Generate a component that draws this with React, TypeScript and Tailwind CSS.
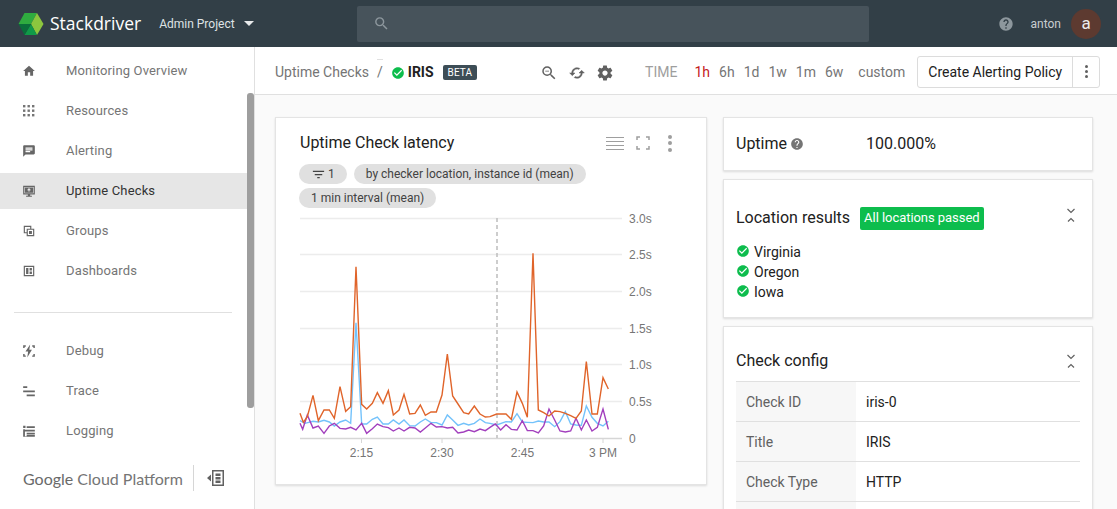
import React from 'react';

const ink = 'fill-current';

// material paths
const paths = {
  home: 'M10 20v-6h4v6h5v-8h3L12 3 2 12h3v8z',
  chat: 'M20 2H4c-1.1 0-1.99.9-1.99 2L2 22l4-4h14c1.1 0 2-.9 2-2V4c0-1.1-.9-2-2-2zM6 9h12v2H6V9zm8 5H6v-2h8v2zm4-6H6V6h12v2z',
  search: 'M15.5 14h-.79l-.28-.27A6.471 6.471 0 0 0 16 9.5 6.5 6.5 0 1 0 9.5 16c1.61 0 3.09-.59 4.23-1.57l.27.28v.79l5 4.99L20.49 19l-4.99-5zm-6 0C7.01 14 5 11.99 5 9.5S7.01 5 9.5 5 14 7.01 14 9.5 11.99 14 9.5 14z',
  zoomOut: 'M15.5 14h-.79l-.28-.27A6.471 6.471 0 0 0 16 9.5 6.5 6.5 0 1 0 9.5 16c1.61 0 3.09-.59 4.23-1.57l.27.28v.79l5 4.99L20.49 19l-4.99-5zm-6 0C7.01 14 5 11.99 5 9.5S7.01 5 9.5 5 14 7.01 14 9.5 11.99 14 9.5 14zM7 9h5v1H7z',
  cached: 'M19 8l-4 4h3c0 3.31-2.69 6-6 6-1.01 0-1.97-.25-2.8-.7l-1.46 1.46C8.97 19.54 10.43 20 12 20c4.42 0 8-3.58 8-8h3l-4-4zM6 12c0-3.31 2.69-6 6-6 1.01 0 1.97.25 2.8.7l1.46-1.46C15.03 4.46 13.57 4 12 4c-4.42 0-8 3.58-8 8H1l4 4 4-4H6z',
  gear: 'M19.43 12.98c.04-.32.07-.64.07-.98s-.03-.66-.07-.98l2.11-1.65c.19-.15.24-.42.12-.64l-2-3.46c-.12-.22-.39-.3-.61-.22l-2.49 1c-.52-.4-1.08-.73-1.69-.98l-.38-2.65C14.46 2.18 14.25 2 14 2h-4c-.25 0-.46.18-.49.42l-.38 2.65c-.61.25-1.17.59-1.69.98l-2.49-1c-.23-.09-.49 0-.61.22l-2 3.46c-.13.22-.07.49.12.64l2.11 1.65c-.04.32-.07.65-.07.98s.03.66.07.98l-2.11 1.65c-.19.15-.24.42-.12.64l2 3.46c.12.22.39.3.61.22l2.49-1c.52.4 1.08.73 1.69.98l.38 2.65c.03.24.24.42.49.42h4c.25 0 .46-.18.49-.42l.38-2.65c.61-.25 1.17-.59 1.69-.98l2.49 1c.23.09.49 0 .61-.22l2-3.46c.12-.22.07-.49-.12-.64l-2.11-1.65zM12 15.5c-1.93 0-3.5-1.57-3.5-3.5s1.57-3.5 3.5-3.5 3.5 1.57 3.5 3.5-1.57 3.5-3.5 3.5z',
  help: 'M12 2C6.48 2 2 6.48 2 12s4.48 10 10 10 10-4.48 10-10S17.52 2 12 2zm1 17h-2v-2h2v2zm2.07-7.75l-.9.92C13.45 12.9 13 13.5 13 15h-2v-.5c0-1.1.45-2.1 1.17-2.83l1.24-1.26c.37-.36.59-.86.59-1.41 0-1.1-.9-2-2-2s-2 .9-2 2H8c0-2.21 1.79-4 4-4s4 1.79 4 4c0 .88-.36 1.68-.93 2.25z',
  check: 'M12 2C6.48 2 2 6.48 2 12s4.48 10 10 10 10-4.48 10-10S17.52 2 12 2zm-2 15l-5-5 1.41-1.41L10 14.17l7.59-7.59L19 8l-9 9z',
  filter: 'M10 18h4v-2h-4v2zM3 6v2h18V6H3zm3 7h12v-2H6v2z',
  monitor: 'M2 3h20v15h-8v2h3v2H7v-2h3v-2H2zm2 2v11h16V5zm1 1h14v9H5zm7 1-3.500 3.500H11V13h2v-2.500h2.500z',
  groups: 'M3 3h13v5h5v13H8v-5H3V3zm2 2v9h3V8h6V5H5zm5 5v9h9v-9h-9zm2 2h5v5h-5v-5z',
  dashboard: 'M3 3h18v18H3V3zm2 2v14h14V5H5zm2 2h4v10H7V7zm6 0h4v4h-4V7zm0 6h4v4h-4v-4z',
  debug: 'M14 1 6 13h4.500L9 23l8-13h-4.500zM2 2h4.500v2.500H4.500V7H2zm20 0v5h-2.500V4.500h-2V2zM2 17h2.500v2.500h2V22H2zm20 0v5h-4.500v-2.500h2V17z',
  trace: 'M2 4h7v3H2zM2 11h20v3H2zM8 18h14v3H8z',
  logging: 'M2 3h4v4H2zM8 4h14v3H8zM2 9h3v12h3v-2h14v3H2zm3 1h3v3h14v-3H8v3H5zM8 15h14v3H8z',
};

const Icon = ({ d, className }: { d: string; className: string }) => (
  <svg viewBox="0 0 24 24" className={`${ink} ${className}`}>
    <path d={d} />
  </svg>
);

const AppsIcon = () => (
  <svg viewBox="0 0 12 12" className="w-[12px] h-[12px] fill-[#757575]">
    {[0, 4.5, 9].map(y => [0, 4.5, 9].map(x => <rect key={`${x}-${y}`} x={x} y={y} width="2.4" height="2.4" />))}
  </svg>
);

const topNav = [
  { label: 'Monitoring Overview', icon: <Icon d={paths.home} className="w-[14px] h-[14px]" /> },
  { label: 'Resources', icon: <AppsIcon /> },
  { label: 'Alerting', icon: <Icon d={paths.chat} className="w-[14px] h-[14px]" /> },
  { label: 'Uptime Checks', icon: <Icon d={paths.monitor} className="w-[14px] h-[14px]" />, active: true },
  { label: 'Groups', icon: <Icon d={paths.groups} className="w-[14px] h-[14px]" /> },
  { label: 'Dashboards', icon: <Icon d={paths.dashboard} className="w-[14px] h-[14px]" /> },
];

const lowerNav = [
  { label: 'Debug', icon: <Icon d={paths.debug} className="w-[14px] h-[14px]" /> },
  { label: 'Trace', icon: <Icon d={paths.trace} className="w-[14px] h-[14px]" /> },
  { label: 'Logging', icon: <Icon d={paths.logging} className="w-[14px] h-[14px]" /> },
];

const NavRow = ({ label, icon, active }: { label: string; icon: React.ReactNode; active?: boolean }) => (
  <div className={`h-[36px] mb-[4px] flex items-center ${active ? 'bg-[#e6e6e6] text-[#333]' : 'text-[#757575]'}`}>
    <div className="w-[22px] ml-[18px] mr-[26px] flex justify-center text-[#666]">{icon}</div>
    <span className="text-[13px] tracking-[0.15px]">{label}</span>
  </div>
);

// traced series, in 3x crop coordinates of the two chart halves
const leftX = (x: number) => x / 3 + 280;
const rightX = (x: number) => x / 3 + 490;
const toY = (y: number) => y / 3 + 210;
const series = (a: number[][], b: number[][]) =>
  [...a.map(([x, y]) => `${leftX(x)},${toY(y)}`), ...b.map(([x, y]) => `${rightX(x)},${toY(y)}`)].join(' ');

const orange = series(
  [[60,610],[70,637],[82,620],[99,556],[115,632],[132,600],[148,600],[163,625],[180,530],[197,604],[212,590],[228,170],[245,583],[260,597],[277,580],[292,548],[309,580],[325,542],[340,615],[357,600],[372,553],[389,612],[405,610],[421,585],[436,616],[453,606],[469,606],[486,555],[502,432],[518,558],[534,582],[551,608],[566,612],[583,588],[600,612],[616,621]],
  [[0,620],[20,612],[48,612],[64,628],[81,546],[97,580],[112,622],[129,130],[145,600],[161,608],[177,618],[194,603],[210,605],[226,610],[242,617],[258,625],[274,603],[289,455],[306,612],[322,612],[339,503],[355,537]],
);
const blue = series(
  [[60,632],[75,640],[99,634],[115,636],[132,631],[148,636],[163,648],[180,636],[197,630],[212,640],[228,338],[245,642],[260,642],[277,628],[292,621],[309,642],[325,642],[340,630],[357,642],[372,630],[389,647],[405,648],[421,636],[436,627],[453,638],[469,638],[486,645],[502,615],[518,630],[534,646],[551,640],[566,645],[583,640],[600,627],[616,638]],
  [[0,640],[20,645],[48,635],[64,636],[81,611],[97,636],[112,637],[129,638],[145,633],[161,636],[177,636],[194,650],[210,635],[226,605],[242,642],[258,645],[274,646],[289,588],[306,622],[322,640],[339,648],[355,634]],
);
const purple = series(
  [[60,640],[68,658],[82,615],[99,654],[115,648],[132,670],[148,648],[163,640],[180,655],[197,657],[212,652],[228,660],[245,640],[260,670],[277,656],[292,642],[309,650],[325,653],[340,663],[357,654],[372,663],[389,652],[405,654],[421,666],[436,654],[453,640],[469,651],[486,650],[502,654],[518,652],[534,669],[551,666],[566,660],[583,665],[600,657],[616,662]],
  [[0,652],[16,642],[32,660],[48,644],[64,658],[81,660],[97,632],[112,662],[129,662],[145,669],[161,648],[177,597],[194,630],[210,663],[226,666],[242,663],[258,625],[274,660],[289,630],[306,663],[322,652],[339,597],[355,658]],
);

const gridY = [
  { y: 218.5, label: '3.0s' },
  { y: 254.5, label: '2.5s' },
  { y: 291.5, label: '2.0s' },
  { y: 328.5, label: '1.5s' },
  { y: 364.5, label: '1.0s' },
  { y: 401.5, label: '0.5s' },
];

// svg viewBox uses page coordinates so traced points stay readable
const LatencyChart = () => (
  <svg viewBox="290 212 372 250" className="w-[372px] h-[250px] block font-['Liberation_Sans',sans-serif]">
    {gridY.map(g => (
      <g key={g.label}>
        <line x1="300" x2="622" y1={g.y} y2={g.y} stroke="#ececec" strokeWidth="1.3" />
        <text x="629" y={g.y + 4} fontSize="12" fill="#757575">{g.label}</text>
      </g>
    ))}
    <line x1="300" x2="622" y1="438.5" y2="438.5" stroke="#d6d6d6" strokeWidth="1.3" />
    <text x="629" y="442.5" fontSize="12" fill="#757575">0</text>
    {[361.5, 442, 522.5, 603].map(x => (
      <line key={x} x1={x} x2={x} y1="438" y2="443" stroke="#d6d6d6" strokeWidth="1" />
    ))}
    <text x="361.5" y="456.5" fontSize="12" fill="#757575" textAnchor="middle">2:15</text>
    <text x="442" y="456.5" fontSize="12" fill="#757575" textAnchor="middle">2:30</text>
    <text x="522.5" y="456.5" fontSize="12" fill="#757575" textAnchor="middle">2:45</text>
    <text x="603" y="456.5" fontSize="12" fill="#757575" textAnchor="middle">3 PM</text>
    <line x1="497" x2="497" y1="218" y2="438" stroke="#bdbdbd" strokeWidth="1.5" strokeDasharray="4 3" />
    <polyline points={blue} fill="none" stroke="#73c2fb" strokeWidth="1.4" />
    <polyline points={purple} fill="none" stroke="#a23fbd" strokeWidth="1.4" />
    <polyline points={orange} fill="none" stroke="#e0642a" strokeWidth="1.4" />
  </svg>
);

const Chip = ({ children }: { children: React.ReactNode }) => (
  <span className="h-[20px] rounded-full bg-[#e0e0e0] px-[12px] inline-flex items-center text-[12px] text-[#424242]">{children}</span>
);

const CollapseIcon = () => (
  <svg viewBox="0 0 10 15" className="w-[10px] h-[15px] fill-none stroke-[#616161] stroke-[1.2]">
    <path d="M1.500 1 5 4.500 8.500 1M2 13.500 5 10.500l3 3" />
  </svg>
);

const configRows = [
  ['Check ID', 'iris-0'],
  ['Title', 'IRIS'],
  ['Check Type', 'HTTP'],
  ['', ''],
];

export default function App() {
  return (
    <div className="w-[1117px] h-[509px] overflow-hidden flex flex-col bg-white font-['Roboto',sans-serif]">
      {/* Header */}
      <header className="h-[47px] shrink-0 bg-[#323f47] flex items-center text-white">
        <svg viewBox="0 0 26 24" className="w-[26px] h-[24px] ml-[18px] shrink-0">
          <path d="M.5 12 6.500 1H19l-6 11z" fill="#2fab3f" />
          <path d="M19 1l6.500 11L19 23l-6-11z" fill="#8cc63e" />
          <path d="M13 12l6 11H6.500z" fill="#109a48" />
          <path d="M.5 12H13L6.500 23z" fill="#0a6e3a" />
        </svg>
        <span className="ml-[6px] text-[17.5px] font-['Open_Sans',sans-serif] leading-none">Stackdriver</span>
        <span className="ml-[18px] text-[12px] text-[#dfe3e5]">Admin Project</span>
        <span className="ml-[9px] w-0 h-0 border-x-[5px] border-x-transparent border-t-[5px] border-t-[#e8eaeb]" />
        <div className="ml-[103px] w-[512px] h-[36px] rounded-[2px] bg-[#47535b] flex items-center pl-[16px] text-[#8d979d]">
          <Icon d={paths.search} className="w-[17px] h-[17px]" />
        </div>
        <Icon d={paths.help} className="ml-auto w-[16px] h-[16px] text-[#8d979d]" />
        <span className="ml-[17px] text-[12px] text-[#c9ced1]">anton</span>
        <span className="ml-[10px] mr-[16px] w-[30px] h-[30px] rounded-full bg-[#5d3a30] flex items-center justify-center text-[17px] text-[#ececec]">a</span>
      </header>

      <div className="flex-1 min-h-0 flex">
        {/* Sidebar */}
        <aside className="w-[255px] shrink-0 border-r border-[#e0e0e0] flex flex-col relative">
          <div className="absolute right-0 top-[46px] w-[7px] h-[315px] rounded-[3px] bg-[#9e9e9e]" />
          <nav className="pt-[6px] pr-[7px]">
            {topNav.map(item => <NavRow key={item.label} {...item} />)}
          </nav>
          <div className="ml-[14px] mr-[22px] mt-[19px] mb-[20px] border-t border-[#e0e0e0]" />
          <nav className="pr-[7px]">
            {lowerNav.map(item => <NavRow key={item.label} {...item} />)}
          </nav>
          <div className="mt-[12px] ml-[23px] flex items-center h-[26px]">
            <span className="w-[170px] text-[#757575] text-[16px] whitespace-nowrap font-['Lato',sans-serif] pt-[1px]"><span className="text-[#6a6a6a]">Google</span> Cloud Platform</span>
            <div className="h-[26px] border-l border-[#d6d6d6]" />
            <svg viewBox="0 0 17 16" className="ml-[13px] w-[17px] h-[16px] fill-[#616161]">
              <path d="M0 8l4-3.500v7zM5 0h12v16H5zm1.500 1.500v13h9v-13zM8.500 3.500h5V6h-5zm0 3.500h5v2.500h-5zm0 3.500h5V13h-5z" fillRule="evenodd" />
            </svg>
          </div>
        </aside>

        {/* Main */}
        <main className="flex-1 min-w-0 flex flex-col bg-[#fafafa]">
          <div className="h-[48px] shrink-0 bg-white border-b border-[#e0e0e0] flex items-center pl-[20px] pt-[4px] text-[#757575]">
            <span className="text-[14px]">Uptime Checks</span>
            <span className="relative ml-[8px] text-[14px]">
              /
              <i className="absolute left-0 -top-[3px] w-[6px] h-px bg-[#e0e0e0]" />
            </span>
            <Icon d={paths.check} className="ml-[8px] w-[14px] h-[14px] text-[#0dbd4d]" />
            <span className="ml-[3px] text-[14px] font-bold text-[#212121]">IRIS</span>
            <span className="ml-[9px] h-[15px] px-[5px] rounded-[2px] bg-[#3d4d56] text-white text-[10px] tracking-[0.1px] flex items-center">BETA</span>
            <Icon d={paths.zoomOut} className="ml-[63px] w-[18px] h-[18px] text-[#616161]" />
            <Icon d={paths.cached} className="ml-[11px] w-[16px] h-[16px] text-[#616161] stroke-current stroke-[0.7]" />
            <Icon d={paths.gear} className="ml-[11px] w-[18px] h-[18px] text-[#616161]" />
            <span className="ml-[31px] text-[14px] text-[#9e9e9e]">TIME</span>
            <span className="ml-[17px] text-[14px] text-[#c41c1c]">1h</span>
            <span className="ml-[9px] text-[14px]">6h</span>
            <span className="ml-[9px] text-[14px]">1d</span>
            <span className="ml-[9px] text-[14px]">1w</span>
            <span className="ml-[9px] text-[14px]">1m</span>
            <span className="ml-[9px] text-[14px]">6w</span>
            <span className="ml-[15px] text-[14px]">custom</span>
            <div className="ml-[12px] -mt-[2px] h-[32px] flex border border-[#dcdcdc] rounded-[3px] bg-white text-[14px] text-[#212121]">
              <span className="px-[10px] pt-[1px] flex items-center border-r border-[#dcdcdc]">Create Alerting Policy</span>
              <span className="w-[26px] flex flex-col items-center justify-center gap-[2px]">
                <i className="w-[3px] h-[3px] bg-[#616161] rounded-full" />
                <i className="w-[3px] h-[3px] bg-[#616161] rounded-full" />
                <i className="w-[3px] h-[3px] bg-[#616161] rounded-full" />
              </span>
            </div>
          </div>

          <div className="flex-1 min-h-0 flex gap-[16px] pl-[20px] pt-[22px] overflow-hidden">
            {/* Chart card */}
            <section className="w-[432px] h-[368px] shrink-0 bg-white border border-[#e4e4e4] shadow-[0_1px_2px_rgba(0,0,0,0.12)]">
              <div className="flex items-center justify-between pl-[24px] pr-[34px] pt-[13px]">
                <h2 className="text-[16px] text-[#212121]">Uptime Check latency</h2>
                <div className="flex items-center gap-[12px] text-[#9e9e9e]">
                  <div className="w-[18px] flex flex-col gap-[3px]">
                    <i className="h-px bg-[#9e9e9e]" /><i className="h-px bg-[#9e9e9e]" /><i className="h-px bg-[#9e9e9e]" /><i className="h-px bg-[#9e9e9e]" />
                  </div>
                  <svg viewBox="0 0 14 14" className="w-[14px] h-[14px] fill-none stroke-[#9e9e9e] stroke-[1.5]">
                    <path d="M1 4V1h3M10 1h3v3M13 10v3h-3M4 13H1v-3" />
                  </svg>
                  <div className="ml-[6px] flex flex-col gap-[2.5px] w-[4px]">
                    <i className="w-[4px] h-[4px] rounded-full bg-[#9e9e9e]" /><i className="w-[4px] h-[4px] rounded-full bg-[#9e9e9e]" /><i className="w-[4px] h-[4px] rounded-full bg-[#9e9e9e]" />
                  </div>
                </div>
              </div>
              <div className="mt-[9px] ml-[23px] flex flex-wrap gap-x-[7px] gap-y-[4px] w-[300px]">
                <Chip><Icon d={paths.filter} className="w-[15px] h-[15px] -my-1" /><span className="ml-[2px]">1</span></Chip>
                <Chip>by checker location, instance id (mean)</Chip>
                <Chip>1 min interval (mean)</Chip>
              </div>
              <div className="ml-[14px] mt-[4px]">
                <LatencyChart />
              </div>
            </section>

            {/* Right column */}
            <div className="w-[370px] shrink-0 flex flex-col gap-[8px]">
              <section className="h-[54px] shrink-0 bg-white border border-[#e4e4e4] shadow-[0_1px_2px_rgba(0,0,0,0.12)] flex items-center pl-[12px] text-[#212121]">
                <span className="text-[16px]">Uptime</span>
                <Icon d={paths.help} className="ml-[3px] w-[14px] h-[14px] text-[#757575]" />
                <span className="ml-[62px] text-[16px]">100.000%</span>
              </section>

              <section className="h-[139px] shrink-0 bg-white border border-[#e4e4e4] shadow-[0_1px_2px_rgba(0,0,0,0.12)] pl-[12px] pr-[16px] pt-[26px] text-[#212121]">
                <div className="flex items-center">
                  <span className="text-[16px]">Location results</span>
                  <span className="ml-[10px] h-[23px] px-[4px] rounded-[2px] bg-[#0dbd4d] text-white text-[13px] tracking-[-0.05px] flex items-center">All locations passed</span>
                  <span className="ml-auto -mt-[6px]"><CollapseIcon /></span>
                </div>
                <ul className="mt-[12px] text-[14px] leading-[20px]">
                  {['Virginia', 'Oregon', 'Iowa'].map(city => (
                    <li key={city} className="flex items-center">
                      <Icon d={paths.check} className="w-[14px] h-[14px] -mt-[3px] mr-[4px] text-[#0dbd4d]" />
                      {city}
                    </li>
                  ))}
                </ul>
              </section>

              <section className="shrink-0 bg-white border border-[#e4e4e4] shadow-[0_1px_2px_rgba(0,0,0,0.12)] pl-[12px] pr-[12px] pt-[24px]">
                <div className="flex items-center justify-between h-[20px] mb-[10px] pr-[4px]">
                  <span className="text-[16px] text-[#212121]">Check config</span>
                  <CollapseIcon />
                </div>
                <div className="border-t border-[#e0e0e0]">
                  {configRows.map(([k, v], i) => (
                    <div key={i} className="h-[40px] flex border-b border-[#e0e0e0]">
                      <div className="w-[120px] bg-[#f7f7f7] pl-[10px] pt-[1px] flex items-center text-[14px] text-[#616161]">{k}</div>
                      <div className="pl-[10px] pt-[1px] flex items-center text-[14px] text-[#212121]">{v}</div>
                    </div>
                  ))}
                </div>
              </section>
            </div>
          </div>
        </main>
      </div>
    </div>
  );
}
